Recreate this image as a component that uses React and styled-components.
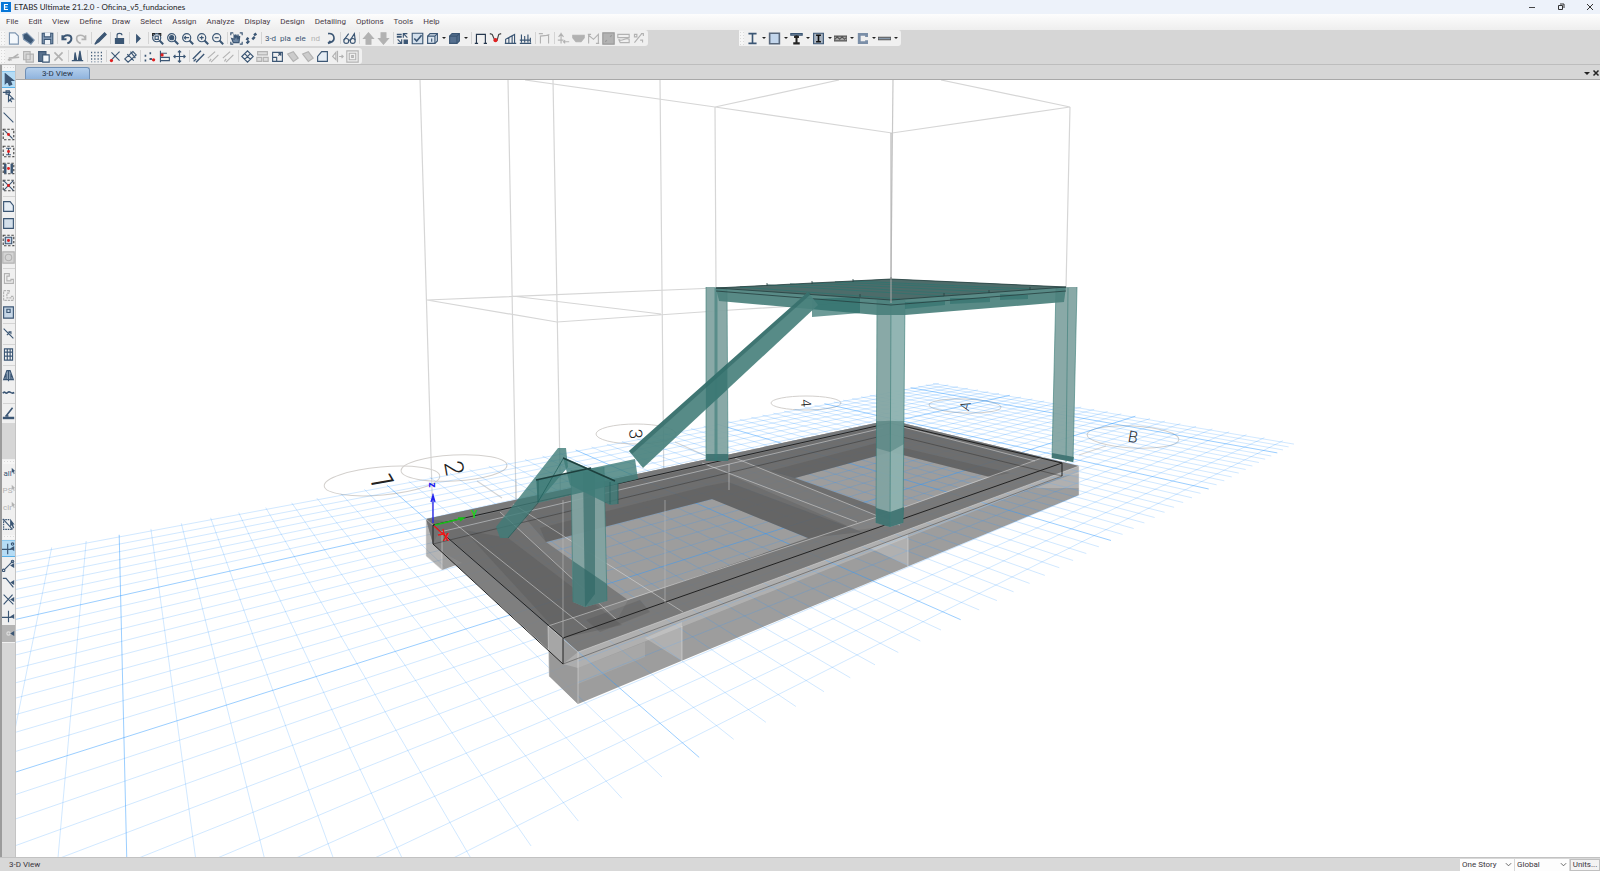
import React from 'react';
import styled, {createGlobalStyle} from 'styled-components';

const navy = '#3b5674';
const grey = '#b2b2b2';
const red = '#e02020';

const GlobalStyle = createGlobalStyle`
  body {
    margin: 0;
    overflow: hidden;
    font-family: Roboto, "Liberation Sans", sans-serif;
    font-size: 8px;
    color: #3a3540;
  }
`;

const Window = styled.div`
  display: flex;
  flex-direction: column;
  height: 100vh;
  background: #d6d6d6;
`;

const TitleBar = styled.header`
  display: flex;
  align-items: center;
  height: 14px;
  flex: none;
  gap: 3px;
  padding-left: 1px;
  background: #edf2fa;
`;

const Logo = styled.svg`
  width: 10px;
  height: 10px;
`;

const Title = styled.h1`
  flex: 1;
  margin: 0;
  font-family: Lato, sans-serif;
  font-size: 8px;
  font-weight: 400;
  color: #222;
`;

const WindowButtons = styled.div`
  display: flex;
  gap: 17px;
  padding-right: 4px;
`;

const BareButton = styled.button`
  display: flex;
  align-items: center;
  justify-content: center;
  width: 12px;
  height: 12px;
  padding: 0;
  border: 0;
  background: none;
  color: #333;
`;

const MenuBar = styled.nav`
  display: flex;
  align-items: center;
  height: 16px;
  flex: none;
  padding-left: 1px;
  background: linear-gradient(#fdfdfd, #eeeeee);
`;

const MenuItem = styled.button`
  padding: 0 5px;
  border: 0;
  background: none;
  font: inherit;
  line-height: 16px;
  color: #4a3c48;
`;

const ToolbarArea = styled.div`
  height: 35px;
  flex: none;
  box-sizing: border-box;
  border-bottom: 1px solid #bdbdbd;
`;

const ToolbarRow = styled.div`
  display: flex;
  gap: 91px;
  height: 18px;
`;

const Toolbar = styled.div`
  display: flex;
  align-items: center;
  height: 16px;
  padding-right: 2px;
  border-radius: 0 3px 3px 0;
  background: #f0f0f0;
`;

const Grip = styled.span`
  width: ${p => (p.$flat ? '12px' : '5px')};
  height: ${p => (p.$flat ? '4px' : '14px')};
  margin: ${p => (p.$flat ? '1px 0' : '0 1px 0 0')};
  flex: none;
  background: radial-gradient(circle, #dadada 1px, #f6f6f6 1px) 0 0 / 3px 3px;
`;

const ToolButton = styled(BareButton)`
  width: 15px;
  height: 15px;
  flex: none;
  font-family: inherit;
  font-size: 8px;
  line-height: 5px;
  color: ${p => (p.disabled ? grey : navy)};
`;

const Caret = styled(BareButton)`
  width: 7px;
  height: ${p => (p.$small ? '12px' : '15px')};
  flex: none;

  &:after {
    content: '';
    border: ${p => (p.$small ? '3px' : '2px')} solid transparent;
    border-top-color: #222;
    border-bottom: 0;
  }
`;

const Separator = styled.span`
  width: ${p => (p.$flat ? '12px' : '1px')};
  height: ${p => (p.$flat ? '1px' : '12px')};
  margin: ${p => (p.$flat ? '2px 0 1px' : '0 1px 0 2px')};
  flex: none;
  background: #d4d4d4;
`;

const ToolIcon = styled.svg`
  width: 13px;
  height: 13px;
  fill: none;
  stroke: currentColor;
  stroke-width: 1.4;
`;

const Body = styled.div`
  display: flex;
  flex: 1;
  min-height: 0;
`;

const SideBar = styled.aside`
  width: 13px;
  flex: none;
  border-left: 2px solid #9b9b9b;
  border-right: 1px solid #c4c4c4;
`;

const SideGroup = styled.div`
  display: flex;
  flex-direction: column;
  align-items: center;
  padding-bottom: 1px;
  margin-bottom: ${p => (p.$spaced ? '36px' : '0')};
  background: #f0f0f0;
`;

const SideButton = styled(ToolButton)`
  width: 13px;
  height: 17px;
  background: ${p => (p.$pressed ? '#b5dcf5' : p.$dim ? '#b4b4b4' : 'none')};
  box-shadow: ${p => (p.$pressed ? 'inset 0 -1px #58b0e8, inset 0 1px #8cc8ee' : 'none')};
`;

const CornerPointer = styled.svg`
  width: 5px;
  height: 8px;
  flex: none;
  margin: 0 -2px 6px -1px;
`;

const Workspace = styled.main`
  display: flex;
  flex-direction: column;
  flex: 1;
  min-width: 0;
`;

const TabStrip = styled.div`
  display: flex;
  align-items: flex-end;
  height: 14px;
  flex: none;
  padding-left: 9px;
  border-bottom: 1px solid #a8a8a8;
`;

const Tab = styled.button`
  width: 65px;
  height: 12px;
  padding: 0;
  border: 1px solid #6f8fb5;
  border-bottom: 0;
  border-radius: 4px 3px 0 0;
  background: linear-gradient(#b4cfec, #8fb3dd);
  font: inherit;
  line-height: 11px;
  color: #26344a;
`;

const TabActions = styled.div`
  display: flex;
  flex: 1;
  justify-content: flex-end;
  gap: 1px;
`;

const CloseView = styled(BareButton)`
  width: 9px;
`;

const Viewport = styled.div`
  flex: 1;
  min-height: 0;
  overflow: hidden;
  background: #fff;
`;

const Scene = styled.svg`
  display: block;
  width: 100%;
  height: 100%;
  fill: none;
`;

const StatusBar = styled.footer`
  display: flex;
  align-items: center;
  height: 13px;
  flex: none;
  padding-left: 9px;
  gap: 1px;
  border-top: 1px solid #c2c2c2;
  background: #d8d8d8;
`;

const StatusText = styled.span`
  flex: 1;
`;

const SelectBox = styled.label`
  display: flex;
  align-items: center;
  width: 54px;
  height: 12px;
  background: #fdfdfd;

  svg {
    width: 7px;
    height: 7px;
    margin-left: -9px;
    pointer-events: none;
  }
`;

const Select = styled.select`
  appearance: none;
  width: 100%;
  height: 12px;
  padding: 0 2px;
  border: 0;
  background: none;
  font: inherit;
  color: inherit;
`;

const UnitsButton = styled.button`
  width: 30px;
  height: 12px;
  padding: 0;
  border: 1px solid #c0c0c0;
  background: #f3f3f3;
  font: inherit;
  line-height: 10px;
  color: inherit;
`;

const dashedBox = <rect x="1.5" y="1.5" width="13" height="13" stroke="#444" strokeDasharray="3 2"/>;
const redDot = <circle cx="8" cy="8" r="1.8" fill={red} stroke="none"/>;
const lens = (
    <>
        <circle cx="7" cy="7" r="5"/>
        <path d="M10.5 10.5L15 15" strokeWidth="2.5"/>
    </>
);
const pointer = <path d="M10 1v10l2-2 1.5 4 1.5-1-1.5-4h2z" fill="currentColor" stroke="none"/>;
const smallPointer = <path d="M10 0v7l2-1 1 3 1-1-1-3h2z" fill="currentColor" stroke="none"/>;
const snap = <path d="M15 5l-5 3 5 3z" fill="currentColor" stroke="none"/>;

const icons = {
    file: <path d="M3 1h7l4 4v10H3z" fill="#f4f8fc" stroke="#7d95b0"/>,
    model: <path d="M1 3l5-2 9 9-4 5-9-6z" fill="currentColor" stroke="#7d95b0"/>,
    save: <><path d="M1.5 1.5h13v13h-13z" fill="#8fa5bf"/><path d="M4 1v5h8V1M4 15V9h8v6" fill="#eef3f8"/></>,
    undo: <path d="M3 4v5h5M3 9c2-7 11-6 11-1 0 3-2 5-5 6" strokeWidth="2.5"/>,
    redo: <path d="M13 4v5H8M13 9C11 2 2 3 2 8c0 3 2 5 5 6" strokeWidth="2"/>,
    pencil: <path d="M1 15l3-5L13 1l2 2-9 9z" fill="currentColor"/>,
    lock: <><path d="M3 8h10v6H3z" fill="currentColor"/><path d="M5 8V4c0-3 6-3 6 0"/></>,
    play: <path d="M5 2l6 6-6 6z" fill="currentColor" stroke="none"/>,
    zoomWindow: <>{lens}<path d="M2 5V2h3M9 2h3v3" stroke="#222"/><path d="M5 5h4v4H5z"/></>,
    zoomAll: <>{lens}<circle cx="7" cy="7" r="2.5" fill="currentColor"/></>,
    zoomPrev: <>{lens}<path d="M4 7h6M6 5L4 7l2 2"/></>,
    zoomIn: <>{lens}<path d="M4.5 7h5M7 4.5v5"/></>,
    zoomOut: <>{lens}<path d="M4.5 7h5"/></>,
    hand: <><path d="M1 4V1h3M12 1h3v3M1 12v3h3M12 15h3v-3"/><path d="M4 13L2 8l3 1V4l2 3V3l2 4 1-4v5l2-3-1 8z" fill="#6f87a3"/></>,
    walk: <path d="M2 14l3-3M2 10l2-3M9 9l3-3M11 4l3-2" strokeWidth="3"/>,
    rotate: <path d="M5 2c8-1 10 8 3 11l-3 1M8 11l-3 3" strokeWidth="2"/>,
    glasses: <><circle cx="4" cy="11" r="3"/><circle cx="12" cy="11" r="3"/><path d="M1 10l6-8M9 10l5-8 1 8M7 10h2"/></>,
    up: <path d="M8 1l6 7h-3v7H5V8H2z" fill="currentColor"/>,
    down: <path d="M8 15l6-7h-3V1H5v7H2z" fill="currentColor"/>,
    blocks: <><path d="M1 3h6M1 6h6" strokeWidth="2"/><path d="M9 2l5 5M14 2H9v5M2 9l5 5M7 9v5H2"/><path d="M10 10h4v4h-4z" fill="currentColor"/></>,
    check: <><path d="M1.5 1.5h13v13h-13z" fill="#d4e0ec"/><path d="M4 8l3 3 6-7" strokeWidth="2"/></>,
    cube: <><path d="M2 5l3-3h9v9l-3 3H2z" fill="#dbe5ef"/><path d="M2 5h9v9M11 5l3-3M7 8v4"/></>,
    solid: <><path d="M2 5l3-3h9v9l-3 3H2z" fill="#56708f"/><path d="M11 5v9M2 5h9l3-3"/></>,
    portal: <path d="M3 14V3h11v11M1 14h4M12 14h4" stroke="#26384e"/>,
    moment: <><path d="M1 2l3 1 3 7h3l2-7 3-1" stroke="#444"/><circle cx="8" cy="10" r="2.5" fill={red} stroke="none"/></>,
    bars: <path d="M1 14h14M2 14V9l11-6v11M6 14V7M10 14V5"/>,
    loads: <path d="M1 14h14M3 3v10M7 5v8M11 3v10M14 7v6M1 10h13"/>,
    deform: <path d="M3 14V5l10-1v10M1 2h5M8 5l6-2"/>,
    joint: <path d="M5 1v13M2 6l3-4 3 4M8 12h7M10 10l-2 2 2 2M1 10h7"/>,
    shell: <path d="M1 4h14v3l-4 5H5L1 7z" fill="currentColor"/>,
    frame: <path d="M2 14V4l6 5 6-6v11M1 3h4M11 14h4"/>,
    panel: <><path d="M1 1h14v14H1z" fill="currentColor" stroke="#999"/><path d="M4 12l2-2M10 6l2-2" stroke="#999"/></>,
    envelope: <path d="M1 3h14v4H1zM2 9c4 4 8-3 13 0v4H4z"/>,
    spread: <path d="M3 3h3v3H3zM10 10h3v3M12 2l-9 11M11 2h3v3"/>,
    cut: <path d="M2 13l12-8M2 10l13-1M1 12h4M5 9v4" strokeWidth="2"/>,
    copy: <path d="M2 2h8v10H2zM5 5h9v10H5z" fill="#dcdcdc"/>,
    paste: <><path d="M2 2h9v12H2z" fill="#58718e"/><path d="M7 6h8v9H7z" fill="#f4f8fc"/></>,
    remove: <path d="M3 3l10 10M13 3L3 13" strokeWidth="2"/>,
    towers: <path d="M1 13h3L5 3l2 10h2l2-12 2 12h2M1 13h14M5 6v7M11 4v9" fill="currentColor"/>,
    dots: <path d="M2 2v13M6 2v13M10 2v13M14 2v13" strokeDasharray="2 2"/>,
    cross: <><path d="M2 13L13 2M3 3l10 10"/><circle cx="3" cy="13" r="2" fill={red} stroke="none"/></>,
    hatch: <path d="M1 11l10-9 4 4-10 9zM4 5l8 8M8 2l6 8"/>,
    nodes: <><path d="M2 7h2M8 11h3M8 4h2M2 13h2" strokeWidth="2.5"/><circle cx="13" cy="12" r="2" fill={red} stroke="none"/></>,
    align: <><path d="M3 1v14M3 4h8M3 9h11v4H3"/><circle cx="5" cy="6" r="2" fill={red} stroke="none"/></>,
    move: <path d="M8 1v14M1 8h14M6 3l2-2 2 2M6 13l2 2 2-2M3 6L1 8l2 2M13 6l2 2-2 2"/>,
    parallel: <path d="M1 11L11 1M5 15L15 5M2 14l3-3" strokeWidth="1.7"/>,
    divide: <path d="M1 10l9-8M5 15l9-9M3 14l2-3"/>,
    lattice: <path d="M1 8l7-7 7 7-7 7zM4.5 4.5l7 7M11.5 4.5l-7 7"/>,
    stack: <path d="M2 2h12v4H2zM1 9h6v5H1zM9 9h6v5H9z" fill="#ddd"/>,
    expand: <path d="M2 3h12v11H2zM2 9h5v5M9 7l3-3M9 4h3v3"/>,
    tilt: <path d="M2 5l7-3 6 8-6 4z" fill="#ccc"/>,
    poly: <path d="M2 14V8l5-6h7v12z" fill="#e5edf5"/>,
    mirror: <path d="M8 1v14M6 3L2 8l4 4zM10 8h5M13 6l2 2-2 2"/>,
    frameBox: <path d="M1 1h14v14H1zM4 4h8v8H4zM7 7h2v2H7z"/>,
    ibeam: <path d="M3 2h10M3 14h10M8 2v12" strokeWidth="2"/>,
    slab: <path d="M2 1.5h12v13H2z" fill="#c3d6ec" stroke="#59687c" strokeWidth="2"/>,
    tee: <><path d="M1 2h14v2H1z" fill="#8799ad"/><path d="M8 4v10M4 14h8M5 6h6" stroke="#222" strokeWidth="2.5"/></>,
    encased: <><path d="M2 1.5h12v13H2z" fill="#aab5c2"/><path d="M5 4h6M5 12h6M8 4v8" stroke="#111" strokeWidth="2"/></>,
    deck: <path d="M0 5h16v6H0zM1 9l3-3 3 3 3-3 3 3 2-2" fill="#aaa" stroke="#555"/>,
    channel: <path d="M13 6V3H4v10h9v-3" stroke="#7b8fa8" strokeWidth="3.5"/>,
    plate: <path d="M0 6.5h16v3H0z" fill="#8798ab" stroke="#555"/>,
    arrow: <path d="M4 1v12l3-3 2 5 3-1-2-5h4z" fill="currentColor"/>,
    reshape: <path d="M1 3h10M5 1h4v4H5zM8 5v9l2-2 2 3M8 5l6 6h-4"/>,
    line: <path d="M2 2l12 12"/>,
    dashLine: <>{dashedBox}<path d="M3 3l10 10"/>{redDot}</>,
    dashI: <>{dashedBox}<path d="M5 4h6M5 12h6M8 4v8"/>{redDot}</>,
    dashFrame: <>{dashedBox}<path d="M4 2v12M12 2v12" strokeWidth="3"/>{redDot}</>,
    dashCross: <>{dashedBox}<path d="M2 2l12 12M14 2L2 14"/>{redDot}</>,
    area: <path d="M2 2h8l4 5v7H2z" fill="#e5edf5"/>,
    rect: <path d="M2 2h12v12H2z" fill="#d3dfea"/>,
    dashRect: <>{dashedBox}<path d="M4 4h8v8H4z" fill="#c6d4e4"/>{redDot}</>,
    circleBox: <><path d="M1 1h14v14H1z" fill="#d4d4d4"/><circle cx="8" cy="8" r="4"/></>,
    cShape: <path d="M9 2H3v12h11V9h-3v2H6V5h3z"/>,
    cDash: <path d="M9 2H2v12h12V9h-3v2H6V5h3z" strokeDasharray="3 1"/>,
    opening: <><path d="M2 1h12v14H2z" fill="#c6d6e6"/><path d="M6 4h4v4H6z"/></>,
    link: <path d="M2 2l12 12M6 10l4-4M8 6h3v3"/>,
    table: <path d="M3 1h10v14H3zM3 5h10M3 10h10M6.5 1v14M10 1v14"/>,
    tower: <path d="M6 2h4l4 11H2zM8 2v13M5 6v7M11 6v7" fill="#8fa3b8"/>,
    wave: <path d="M1 9c3-4 3 2 6-1s4 3 8 0" strokeWidth="2"/>,
    sketch: <><path d="M1 13.500h14" strokeWidth="3"/><path d="M5 11l8-10M4 11h4" strokeWidth="2"/></>,
    clearLine: <><path d="M1 1l12 13"/><path d="M1 2h8M2 4v10h10" strokeDasharray="2 1"/>{pointer}</>,
    snapGrid: <><path d="M7 2v13M0 9h12"/><circle cx="13" cy="2.5" r="1.5"/>{snap}</>,
    snapEnd: <><circle cx="2" cy="14" r="1.5"/><path d="M3 13L13 3"/><circle cx="13" cy="3" r="1.5"/>{snap}</>,
    snapMid: <><path d="M1 3h4l9 11"/>{snap}</>,
    snapCross: <><path d="M2 2l12 12M13 2L2 14"/>{snap}</>,
    snapPerp: <><path d="M8 1v14M0 9h12"/>{snap}</>,
    snapFine: <><circle cx="8" cy="8" r="2" stroke="#ddd"/>{snap}</>,
};

// "|" is a separator, "v" a drop-down caret, a leading "-" a disabled tool
const mainTools = 'file model | save | undo -redo | pencil | lock | play | zoomWindow zoomAll zoomPrev zoomIn zoomOut | hand walk | t:3-d t:pla t:ele -t:nd rotate | glasses | -up -down | blocks check cube v solid v | portal moment bars loads | -deform | -joint -shell -frame -panel -envelope -spread'.split(' ');
const sectionTools = 'ibeam v slab v tee v encased v deck v channel v plate v'.split(' ');
const editTools = '-cut -copy paste -remove | towers | dots | cross hatch | nodes align move | parallel -divide -divide | lattice -stack expand -tilt -tilt poly -mirror -frameBox'.split(' ');
const drawTools = '*arrow reshape | line dashLine dashI dashFrame dashCross | area rect dashRect -circleBox | -cShape -cDash opening | link | table | tower wave | sketch'.split(' ');
const selectTools = 't:all -t:PS -t:clr clearLine'.split(' ');
const snapTools = '*snapGrid snapEnd snapMid snapCross snapPerp #snapFine'.split(' ');

const menus = ['File', 'Edit', 'View', 'Define', 'Draw', 'Select', 'Assign', 'Analyze', 'Display', 'Design', 'Detailing', 'Options', 'Tools', 'Help'];

function Icon({name}) {
    return <ToolIcon viewBox="0 0 16 16" aria-hidden="true">{icons[name]}</ToolIcon>;
}

function Tools({items, flat}) {
    const Button = flat ? SideButton : ToolButton;
    return items.map((item, index) => {
        if (item === '|') return <Separator key={index} $flat={flat}/>;
        if (item === 'v') return <Caret key={index} aria-label="More"/>;
        const name = item.replace(/^[-*#]/, '');
        const isText = name.startsWith('t:');
        return (
            <Button
                key={index}
                disabled={item[0] === '-'}
                $pressed={item[0] === '*'}
                $dim={item[0] === '#'}
                aria-label={name.replace('t:', '')}
            >
                {isText ? name.slice(2) : <Icon name={name}/>}
                {isText && flat && <CornerPointer viewBox="9 0 7 9">{smallPointer}</CornerPointer>}
            </Button>
        );
    });
}

// ground plane to screen, one unit is ten grid cells
function project(i, j) {
    const w = 1 - 0.2303 * i + 0.2018 * j;
    return [
        ((433 - 25.9 * i + 336.7 * j) / w).toFixed(1),
        ((525.3 - 56.6 * i + 49.8 * j) / w).toFixed(1),
    ].join(' ');
}

function Grid() {
    let minor = '';
    let major = '';
    for (let n = -7; n <= 19; n++) {
        const d = `M${project(n / 10, -1.9)}L${project(n / 10, 4.34)}`;
        if (n % 10 === 0) major += d; else minor += d;
    }
    for (let n = -19; n <= 43; n++) {
        const d = `M${project(-0.73, n / 10)}L${project(1.97, n / 10)}`;
        if (n % 10 === 0) major += d; else minor += d;
    }
    return (
        <g stroke="#2f98ff">
            <path d={minor} strokeOpacity="0.22"/>
            <path d={major} strokeOpacity="0.48"/>
        </g>
    );
}

function Wires() {
    return (
        <g stroke="#d6d6d6" strokeWidth="1.2">
            <path d="M420 80L433 525M508 80L516 500M553 80L563 638M660 80L665 603"/>
            <path d="M525 80L715 107L892 133L1070 107L941 80M715 107L839 80M715 107L716 288M1070 107L1066 288"/>
            <path d="M427 300L716 288M427 300L557 322L716 311L890 300M512 296L661 314"/>
            <path d="M893 80L891 280" stroke="#c8c8c8"/>
            <path d="M477 481L502 498M1079 455L1106 446M675 442L706 456"/>
        </g>
    );
}

const bubbles = [
    {label: '1', x: 382, y: 481, rx: 58, ry: 14, tilt: -5, turn: 80, size: 32},
    {label: '2', x: 454, y: 468, rx: 53, ry: 13, tilt: -3, turn: 80, size: 26},
    {label: '3', x: 636, y: 434, rx: 40, ry: 10, tilt: 0, turn: 85, size: 18},
    {label: '4', x: 806, y: 403, rx: 35, ry: 7, tilt: 0, turn: 85, size: 14},
    {label: 'A', x: 965, y: 406, rx: 36, ry: 7, tilt: 2, turn: -75, size: 14},
    {label: 'B', x: 1133, y: 437, rx: 46, ry: 11, tilt: 3, turn: 10, size: 16},
];

function Bubbles() {
    return bubbles.map(b => (
        <g key={b.label} transform={`translate(${b.x} ${b.y})`}>
            <ellipse rx={b.rx} ry={b.ry} stroke="#d3d0cd" transform={`rotate(${b.tilt})`}/>
            <text
                fill="#222"
                fontSize={b.size}
                fontWeight="300"
                textAnchor="middle"
                dominantBaseline="central"
                transform={`rotate(${b.turn})`}
            >
                {b.label}
            </text>
        </g>
    ));
}

function Foundation() {
    return (
        <g>
            {/* top faces of the beams with both bays left open */}
            <path
                fill="#666"
                fillOpacity="0.86"
                fillRule="evenodd"
                d="M426 519L890 420L1079 466L578 652L563 638V664L549 650L433 544Z
                   M546 542L712 499L808 538L628 600Z
                   M795 478L891 452L990 477L891 512Z"
            />
            <g fill="#fff" fillOpacity="0.08">
                <path d="M426 519L890 420L1079 466L1053 458L890 424L453 522Z"/>
                <path d="M548 626L891 512L1053 454L1079 466L578 652Z"/>
                <path d="M702 463L735 458L900 525L857 530Z"/>
                <path d="M500 512L513 504L546 542L628 600L617 620Z"/>
            </g>
            <path d="M433 544L549 650L549 626L440 530Z" fill="#fff" fillOpacity="0.12"/>
            <g fill="#4c4c4c" fillOpacity="0.25">
                <path d="M540 528L707 486L728 482L862 532L808 538L712 499L546 542Z"/>
                <path d="M770 471L877 443L891 445L1010 473L990 477L891 452L795 478Z"/>
                <path d="M464 530L508 538L622 625L563 638Z"/>
                <path d="M586 620L640 600L650 612L600 632Z"/>
            </g>
            {/* corner boxes */}
            <path d="M426 519L442 533L442 570L426 556Z" fill="#777" fillOpacity="0.55"/>
            <path d="M442 552L462 563L442 570Z" fill="#888" fillOpacity="0.8"/>
            <path d="M548 626L578 652L578 704L549 676Z" fill="#999" fillOpacity="0.8"/>
            <g fill="#fff" fillOpacity="0.2">
                <path d="M563 664L578 652L1079 466V474L1063 476L578 668Z"/>
                <path d="M645 638L682 622V661Z"/>
                <path d="M578 668L645 642V657L578 684Z" fillOpacity="0.1"/>
                <path d="M870 548L908 534V566Z"/>
                <path d="M1035 488L1079 472V488Z"/>
                <path d="M548 626L563 638L563 664L549 652Z"/>
            </g>
            <g stroke="#e4e4e4" strokeOpacity="0.5">
                <path d="M426 519V556L442 570V533L426 519"/>
                <path d="M440 532L883 428M903 427L1035 461M548 626L877 517L1053 454"/>
                <path d="M453 522L587 629M500 512L617 620M513 504L683 612"/>
                <path d="M702 463L857 522M735 458L900 525M682 626V661M908 538V567M729 464V490"/>
                <path d="M549 676L548 626L578 652V704M578 652L1079 466V495"/>
            </g>
            <g stroke="#222">
                <path d="M433 525L890 423L1062 463L563 638Z"/>
                <path d="M433 525V544L563 664V638M1062 463V476M890 423V434"/>
                <path d="M433 544L890 434L1062 476L563 664" strokeOpacity="0.4"/>
            </g>
        </g>
    );
}

function Frame() {
    return (
        <g>
            {/* columns */}
            <g fill="#82a4a1" fillOpacity="0.94">
                <path d="M706 287L727 287L728 461L706 461Z"/>
                <path d="M1056 287L1077 287L1073 462L1052 458Z"/>
                <path d="M877 300L905 300L903 523L890 527L876 523Z"/>
                <path d="M571 470L604 467L607 601L585 607L573 602Z"/>
            </g>
            <path d="M891 300H905L903 523L890 527Z" fill="#aedad6" fillOpacity="0.25"/>
            <path d="M583 472H595V594L585 607Z" fill="#2d6664" fillOpacity="0.6"/>
            <path d="M573 561L607 584L607 601L585 607L573 602Z" fill="#2d6664" fillOpacity="0.6"/>
            <path d="M876 421H904V444L890 452L876 448Z" fill="#2d6664" fillOpacity="0.35"/>
            <path d="M876 508L890 512L904 507L903 523L890 527L876 523ZM706 454H728V461H706ZM1052 453L1074 457L1073 462L1052 458Z" fill="#2d6664" fillOpacity="0.75"/>
            <g stroke="#387b76" strokeOpacity="0.6">
                <path d="M706 287V461M727 287L728 461M891 300L890 527M877 300L876 523M905 300L903 523"/>
                <path d="M1056 287L1052 458M1077 287L1073 462M1068 288L1066 462M573 602L571 470M607 601L604 467"/>
                <path d="M716 288V461" strokeWidth="3"/>
            </g>
            {/* roof */}
            <path d="M716 288L719 301L877 315H905L1064 302L1066 287L891 279Z" fill="#4a807c" fillOpacity="0.92"/>
            <path d="M812 299L860 297V313L812 317Z" fill="#2f706c" fillOpacity="0.7"/>
            <path d="M905 302L945 301V305L905 309ZM950 298L990 298V302L950 304ZM1000 294L1028 295V299L1000 300Z" fill="#2f706c" fillOpacity="0.6"/>
            <path d="M716 288L891 279L1066 287L891 300Z" fill="#4d6c6a"/>
            <path d="M767 285L944 296M812 283L990 292M853 281L1030 289M740 287L900 299M790 284L960 294M835 282L1010 290" stroke="#35726e"/>
            <path d="M716 288L891 279L1066 287L891 300ZM716 291L891 305L1066 291M767 283v3M812 281v3M853 279v3M891 277v3M860 294v3M944 293v3M989 290v3M1030 287v3" stroke="#263f3e" strokeOpacity="0.8"/>
            <path d="M891 133V303" stroke="#aaa"/>
            {/* upper flight */}
            <path d="M629 451L808 292L818 305L643 468Z" fill="#4a827e" fillOpacity="0.93"/>
            <path d="M629 451L808 292L811 294L632 454Z" fill="#28605e" fillOpacity="0.5"/>
            <path d="M706 383L727 364V390L706 409Z" fill="#2f706c" fillOpacity="0.5"/>
            {/* landing and lower flight */}
            <g fill="#3f7c78" fillOpacity="0.8">
                <path d="M558 448L566 448L568 467L538 502L508 538L500 538L496 527Z"/>
                <path d="M536 480L635 459L638 479L538 503Z"/>
                <path d="M563 457L615 480L618 483V504L610 505L570 485Z"/>
            </g>
            <path d="M538 480V503L508 538M563 459L538 502M610 482V504M618 483V504" stroke="#205c58" strokeOpacity="0.7"/>
            <path d="M536 480L591 468M563 458L615 481" stroke="#1d3f3d" strokeWidth="1.5"/>
        </g>
    );
}

function Axes() {
    return (
        <g fontSize="10" fontWeight="700" textAnchor="middle">
            <path d="M433 523V494M431 502l2-7 2 7" stroke="#2222f0" strokeWidth="1.3"/>
            <path d="M435 525L464 518M458 518h6l-4 3" stroke="#18c018" strokeWidth="1.3"/>
            <path d="M434 526L444 535M438 535l6-1-1-5" stroke="#f01818" strokeWidth="1.3"/>
            <text x="432" y="485" fill="#2222f0" transform="rotate(90 432 485)" dominantBaseline="central">z</text>
            <text x="474" y="518" fill="#18d018">Y</text>
            <text x="446" y="541" fill="#f01818">X</text>
        </g>
    );
}

function ModelView() {
    return (
        <Scene viewBox="16 80 1584 777" preserveAspectRatio="xMinYMin slice" role="img" aria-label="3-D model">
            <Wires/>
            <Bubbles/>
            <path d="M426 519L890 420L1079 466V495L578 704L549 676L549 650L433 544Z" fill="#9d9d9d"/>
            <Grid/>
            <Foundation/>
            <path d="M516 480V500M563 500V638M665 500V603" stroke="#bbb" strokeOpacity="0.6"/>
            <Frame/>
            <Axes/>
        </Scene>
    );
}

export default function App() {
    return (
        <Window>
            <GlobalStyle/>
            <TitleBar>
                <Logo viewBox="0 0 10 10" aria-hidden="true">
                    <rect width="10" height="10" fill="#0877d8"/>
                    <path d="M7 2.5H3.5v5H7M3.5 5h3" fill="none" stroke="#fff" strokeWidth="1.2"/>
                </Logo>
                <Title>ETABS Ultimate 21.2.0 - Oficina_v5_fundaciones</Title>
                <WindowButtons>
                    <BareButton aria-label="Minimize">
                        <svg width="8" height="8"><path d="M1 4.5h6" stroke="#444"/></svg>
                    </BareButton>
                    <BareButton aria-label="Restore">
                        <svg width="8" height="8" fill="none" stroke="#333"><path d="M1.5 2.5h4v4h-4zM3 1h4v4"/></svg>
                    </BareButton>
                    <BareButton aria-label="Close">
                        <svg width="8" height="8"><path d="M1 1l6 6M7 1L1 7" stroke="#333"/></svg>
                    </BareButton>
                </WindowButtons>
            </TitleBar>
            <MenuBar>
                {menus.map(menu => <MenuItem key={menu}>{menu}</MenuItem>)}
            </MenuBar>
            <ToolbarArea>
                <ToolbarRow>
                    <Toolbar><Grip/><Tools items={mainTools}/></Toolbar>
                    <Toolbar><Grip/><Tools items={sectionTools}/></Toolbar>
                </ToolbarRow>
                <ToolbarRow>
                    <Toolbar><Grip/><Tools items={editTools}/></Toolbar>
                </ToolbarRow>
            </ToolbarArea>
            <Body>
                <SideBar>
                    <SideGroup $spaced><Grip $flat/><Tools items={drawTools} flat/></SideGroup>
                    <SideGroup><Grip $flat/><Tools items={selectTools} flat/></SideGroup>
                    <SideGroup><Grip $flat/><Tools items={snapTools} flat/></SideGroup>
                </SideBar>
                <Workspace>
                    <TabStrip>
                        <Tab>3-D View</Tab>
                        <TabActions>
                            <Caret $small aria-label="Window list"/>
                            <CloseView aria-label="Close view">
                                <svg width="8" height="8"><path d="M1.5 1.5l5 5M6.5 1.5l-5 5" stroke="#222" strokeWidth="1.5"/></svg>
                            </CloseView>
                        </TabActions>
                    </TabStrip>
                    <Viewport><ModelView/></Viewport>
                </Workspace>
            </Body>
            <StatusBar>
                <StatusText>3-D View</StatusText>
                <SelectBox>
                    <Select aria-label="Stories" defaultValue="One Story">
                        <option>One Story</option>
                        <option>All Stories</option>
                    </Select>
                    <svg viewBox="0 0 8 8"><path d="M1 2.5l3 3 3-3" fill="none" stroke="#555"/></svg>
                </SelectBox>
                <SelectBox>
                    <Select aria-label="Coordinate system" defaultValue="Global">
                        <option>Global</option>
                    </Select>
                    <svg viewBox="0 0 8 8"><path d="M1 2.5l3 3 3-3" fill="none" stroke="#555"/></svg>
                </SelectBox>
                <UnitsButton>Units...</UnitsButton>
            </StatusBar>
        </Window>
    );
}
